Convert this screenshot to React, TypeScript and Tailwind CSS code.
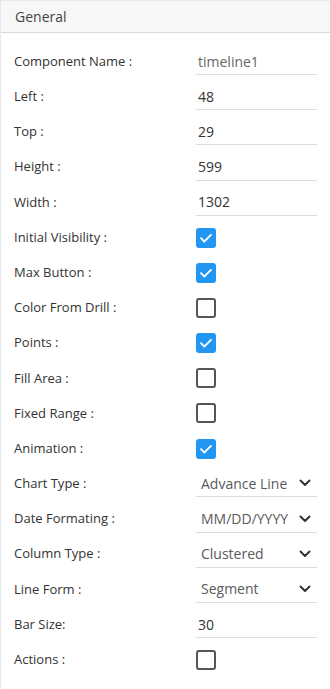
import React from 'react';

type Row =
  | { label: string; kind: 'text'; value: string; muted?: boolean }
  | { label: string; kind: 'check'; checked: boolean }
  | { label: string; kind: 'select'; value: string };

const rows: Row[] = [
  { label: 'Component Name :', kind: 'text', value: 'timeline1', muted: true },
  { label: 'Left :', kind: 'text', value: '48' },
  { label: 'Top :', kind: 'text', value: '29' },
  { label: 'Height :', kind: 'text', value: '599' },
  { label: 'Width :', kind: 'text', value: '1302' },
  { label: 'Initial Visibility :', kind: 'check', checked: true },
  { label: 'Max Button :', kind: 'check', checked: true },
  { label: 'Color From Drill :', kind: 'check', checked: false },
  { label: 'Points :', kind: 'check', checked: true },
  { label: 'Fill Area :', kind: 'check', checked: false },
  { label: 'Fixed Range :', kind: 'check', checked: false },
  { label: 'Animation :', kind: 'check', checked: true },
  { label: 'Chart Type :', kind: 'select', value: 'Advance Line' },
  { label: 'Date Formating :', kind: 'select', value: 'MM/DD/YYYY' },
  { label: 'Column Type :', kind: 'select', value: 'Clustered' },
  { label: 'Line Form :', kind: 'select', value: 'Segment' },
  { label: 'Bar Size:', kind: 'text', value: '30' },
  { label: 'Actions :', kind: 'check', checked: false },
];

function Check({ checked }: { checked: boolean }) {
  if (checked) {
    return (
      <div className="flex h-5 w-5 items-center justify-center rounded-[3px] bg-[#2196f3]">
        <svg width="14" height="14" viewBox="0 0 14 14" fill="none">
          <path d="M2 7.2l3.3 3.3L12 3.8" stroke="white" strokeWidth="1.8" strokeLinecap="round" strokeLinejoin="round" />
        </svg>
      </div>
    );
  }
  return <div className="h-5 w-5 rounded-[3px] border-2 border-[#555]" />;
}

function Field({ row }: { row: Row }) {
  if (row.kind === 'check') {
    return (
      <div className="flex h-[27px] items-center">
        <Check checked={row.checked} />
      </div>
    );
  }
  if (row.kind === 'select') {
    return (
      <div className="flex h-[27px] items-center justify-between border-b border-[#dcdcdc] pl-[5px] pr-[6px] text-[14px] text-[#5a5a5a]">
        <span className="whitespace-nowrap">{row.value}</span>
        <svg width="12" height="8" viewBox="0 0 12 8" fill="none">
          <path d="M1.5 1.5L6 6l4.5-4.5" stroke="#333" strokeWidth="2" strokeLinecap="round" strokeLinejoin="round" />
        </svg>
      </div>
    );
  }
  return (
    <div
      className={`flex h-[27px] items-center border-b border-[#dcdcdc] pl-[2px] text-[14px] ${
        row.muted ? 'text-[#666]' : 'text-[#333]'
      }`}
    >
      {row.value}
    </div>
  );
}

export default function App() {
  return (
    <div
      className="h-[689px] w-[330px] border-l border-t border-[#e3e9f0] bg-white text-[13px]"
      style={{ fontFamily: '"Open Sans", sans-serif' }}
    >
      <div className="flex h-[32px] items-center border-b border-[#d9d9d9] bg-[#f7f7f7] px-[14px] text-[14px] text-[#444]">
        General
      </div>
      <div className="pt-[11px]">
        {rows.map((row) => (
          <div key={row.label} className="flex h-[35.2px] items-center">
            <div className="w-[195px] pl-[13px] text-[#333]">{row.label}</div>
            <div className="w-[121px]">
              <Field row={row} />
            </div>
          </div>
        ))}
      </div>
    </div>
  );
}
